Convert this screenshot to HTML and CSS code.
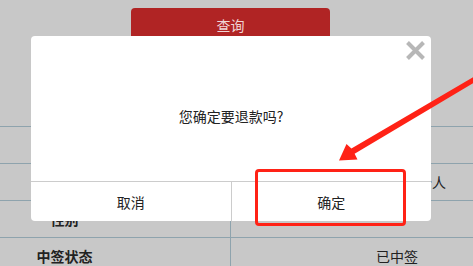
FILE: index.html
```html
<!DOCTYPE html>
<html lang="zh-CN">
  <head>
    <meta charset="UTF-8" />
    <meta name="viewport" content="width=device-width, initial-scale=1.0" />
    <title>退款确认</title>
    <link rel="stylesheet" href="styles.css">
  </head>
  <body>
    <div class="page">
      <div class="search-bar">
        <button class="btn-search">查询</button>
      </div>

      <div class="info-table">
        <div class="row">
          <div class="label">姓名</div>
          <div class="value value-b">张三</div>
        </div>
        <div class="row">
          <div class="label">类型</div>
          <div class="value value-a">个人</div>
        </div>
        <div class="row">
          <div class="label">性别</div>
          <div class="value value-b"></div>
        </div>
        <div class="row">
          <div class="label">中签状态</div>
          <div class="value value-b">已中签</div>
        </div>
      </div>
    </div>

    <!-- 退款确认弹窗 -->
    <div class="modal">
      <button class="modal-close" aria-label="关闭">
        <svg width="21" height="21" viewBox="0 0 21 21">
          <path d="M2.5 2.5 L18.5 18.5 M18.5 2.5 L2.5 18.5" stroke="#b7b7b7" stroke-width="4" />
        </svg>
      </button>
      <div class="modal-body">
        <p>您确定要退款吗?</p>
      </div>
      <div class="modal-footer">
        <button class="btn-cancel">取消</button>
        <button class="btn-ok">确定</button>
      </div>
    </div>

    <!-- 标注 -->
    <div class="mark-box"></div>
    <svg class="mark-arrow" width="473" height="266" viewBox="0 0 473 266">
      <polygon points="339,160.5 346.5,144 351.4,148.6 476,75.5 476,81.5 354.6,153.8 357.5,159.5" fill="#ff2216" />
    </svg>
  </body>
</html>
```

FILE: styles.css
```css
* {
  margin: 0;
  padding: 0;
  box-sizing: border-box;
}

body {
  font-family: "Noto Sans CJK SC", "Noto Sans", sans-serif;
  background: #c8c8c8;
  width: 473px;
  height: 266px;
  overflow: hidden;
  position: relative;
  color: #222;
}

.search-bar {
  display: flex;
  padding-top: 8px;
  padding-left: 131px;
}

.btn-search {
  width: 199px;
  height: 40px;
  background: #b02424;
  color: #f0d6d6;
  border: none;
  border-radius: 4px;
  font-family: inherit;
  font-size: 14px;
  padding-bottom: 6px;
}

.info-table {
  margin-top: 78px;
}

.row {
  display: flex;
  height: 37px;
  border-top: 1px solid #8ea3ad;
}

.label {
  width: 231px;
  padding-right: 101px;
  text-align: center;
  font-size: 14px;
  font-weight: bold;
  line-height: 36px;
  border-right: 1px solid #8ea3ad;
}

.value {
  flex: 1;
  text-align: right;
  font-size: 14px;
  line-height: 36px;
}

.value-a {
  padding-right: 27px;
}

.value-b {
  padding-right: 55px;
}

.modal {
  position: absolute;
  top: 36px;
  left: 31px;
  width: 400px;
  height: 185px;
  background: white;
  border-radius: 4px;
  display: flex;
  flex-direction: column;
}

.modal-close {
  position: absolute;
  top: 4px;
  right: 5px;
  width: 21px;
  height: 21px;
  border: none;
  background: none;
  display: flex;
}

.modal-body {
  flex: 1;
  padding-top: 70px;
  text-align: center;
}

.modal-body p {
  font-size: 14px;
  line-height: 20px;
  color: #222;
}

.modal-footer {
  display: flex;
  height: 40px;
  border-top: 1px solid #cccccc;
}

.modal-footer button {
  flex: 1;
  background: none;
  border: none;
  font-family: inherit;
  font-size: 14px;
  color: #222;
}

.btn-cancel {
  border-right: 1px solid #cccccc !important;
}

.mark-box {
  position: absolute;
  top: 169px;
  left: 255px;
  width: 151px;
  height: 57px;
  border: 3px solid #ff2216;
  border-radius: 4px;
}

.mark-arrow {
  position: absolute;
  top: 0;
  left: 0;
  pointer-events: none;
}
```
